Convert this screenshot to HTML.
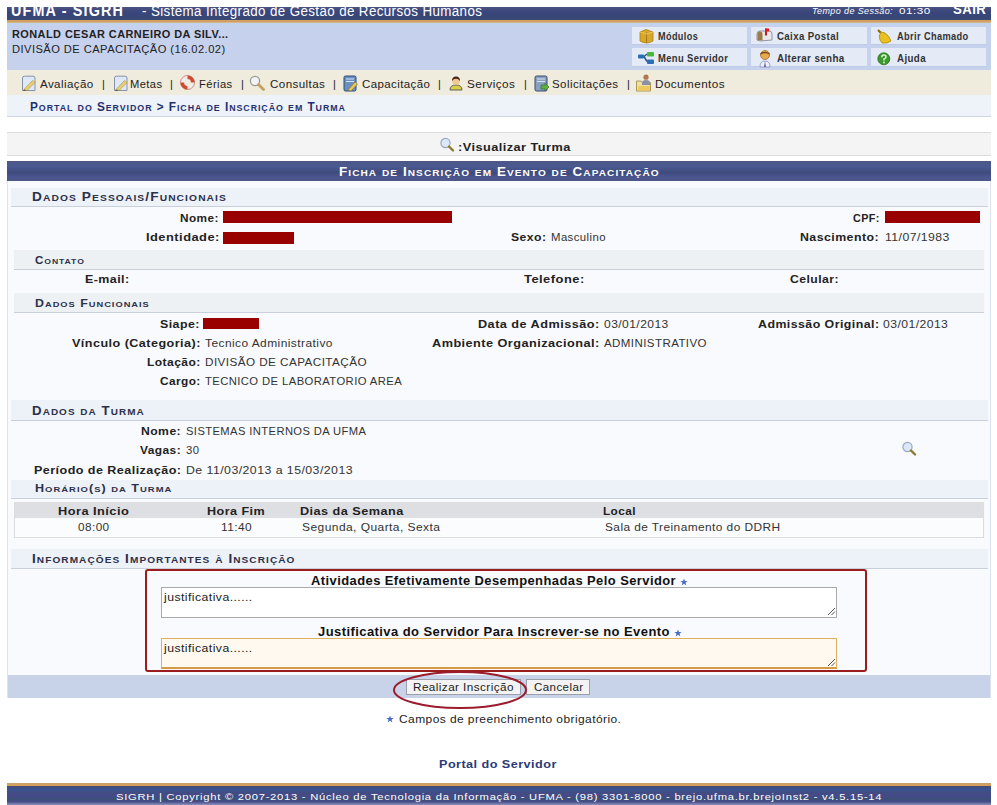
<!DOCTYPE html>
<html><head><meta charset="utf-8"><title>SIGRH</title>
<style>
html,body{margin:0;padding:0;background:#fff;}
body{width:997px;height:805px;position:relative;overflow:hidden;font-family:"Liberation Sans",sans-serif;}
.b{position:absolute;box-sizing:border-box;}
.t{position:absolute;white-space:nowrap;transform-origin:0 0;}
svg{position:absolute;}
</style></head><body>
<!-- header -->
<div class="b" style="left:7px;top:7px;width:984px;height:13px;background:linear-gradient(#4c5480,#3a467c 35%,#394678 70%,#3a4872);"></div>
<div class="b" style="left:7px;top:20px;width:984px;height:3px;background:linear-gradient(#d9a05e,#c9a06c 70%,#e8d0a8);"></div>
<div class="b" style="left:7px;top:23px;width:984px;height:47px;background:linear-gradient(#bfd6ec,#c6d1ee 3px,#c6d2ec);"></div>
<!-- modules -->
<div class="b" style="left:632px;top:27px;width:115px;height:18px;background:#e4ebf7;border-bottom:1px solid #bccbe6;"></div>
<div class="b" style="left:751px;top:27px;width:116px;height:18px;background:#e4ebf7;border-bottom:1px solid #bccbe6;"></div>
<div class="b" style="left:871px;top:27px;width:115px;height:18px;background:#e4ebf7;border-bottom:1px solid #bccbe6;"></div>
<div class="b" style="left:632px;top:48px;width:115px;height:19px;background:#e4ebf7;border-bottom:1px solid #bccbe6;"></div>
<div class="b" style="left:751px;top:48px;width:116px;height:19px;background:#e4ebf7;border-bottom:1px solid #bccbe6;"></div>
<div class="b" style="left:871px;top:48px;width:115px;height:19px;background:#e4ebf7;border-bottom:1px solid #bccbe6;"></div>
<!-- menu -->
<div class="b" style="left:7px;top:70px;width:984px;height:25px;background:#efebdd;"></div>
<div class="b" style="left:7px;top:95px;width:984px;height:22px;background:#eef2f9;border-bottom:1px solid #cfd6e2;"></div>
<!-- visualizar -->
<div class="b" style="left:7px;top:132px;width:984px;height:24px;background:#f4f4f4;border-top:1px solid #dcdcdc;border-bottom:1px solid #dcdcdc;"></div>
<!-- form caption -->
<div class="b" style="left:7px;top:161px;width:984px;height:20px;background:linear-gradient(#4e5784,#4a5990 28%,#3e4b7c 58%,#4a5690 80%,#4e5886);"></div>
<!-- form body -->
<div class="b" style="left:7px;top:181px;width:984px;height:517px;background:#f9fafd;border:1px solid #dde3ee;border-top:none;"></div>
<!-- subheaders -->
<div class="b" style="left:11px;top:188px;width:977px;height:19px;background:#edf1f8;border-bottom:1px solid #c9d0dc;"></div>
<div class="b" style="left:14px;top:250px;width:970px;height:20px;background:#edf1f4;border-bottom:1px solid #c9d0dc;"></div>
<div class="b" style="left:14px;top:293px;width:970px;height:20px;background:#edf1f4;border-bottom:1px solid #c9d0dc;"></div>
<div class="b" style="left:11px;top:400px;width:977px;height:21px;background:#edf1f8;border-bottom:1px solid #c9d0dc;"></div>
<div class="b" style="left:11px;top:480px;width:977px;height:19px;background:#edf1f8;border-bottom:1px solid #c9d0dc;"></div>
<!-- horario table -->
<div class="b" style="left:14px;top:502px;width:970px;height:36px;background:#fbfcfd;border:1px solid #dcdcdc;"></div>
<div class="b" style="left:15px;top:503px;width:968px;height:15px;background:#dedfe3;"></div>
<div class="b" style="left:11px;top:549px;width:977px;height:20px;background:#edf1f8;border-bottom:1px solid #c9d0dc;"></div>
<!-- red box -->
<div class="b" style="left:145px;top:569px;width:722px;height:103px;border:2px solid #9b1c1c;border-radius:3px;"></div>
<div class="b" style="left:161px;top:587px;width:676px;height:31px;background:#fff;border:1px solid #a9a9a9;"></div>
<div class="b" style="left:161px;top:638px;width:676px;height:31px;background:#fff9f0;border:1px solid #e0b060;border-bottom:2px solid #d49a48;"></div>
<!-- button bar -->
<div class="b" style="left:8px;top:675px;width:982px;height:23px;background:#c8d3ea;"></div>
<div class="b" style="left:406px;top:679px;width:115px;height:16px;background:#f3f3f3;border:1px solid #9aa0a8;"></div>
<div class="b" style="left:526px;top:679px;width:64px;height:16px;background:#f3f3f3;border:1px solid #9aa0a8;"></div>
<svg style="left:390px;top:668px" width="142" height="45"><ellipse cx="70" cy="22" rx="66" ry="18" fill="none" stroke="#9b1c2c" stroke-width="2"/></svg>
<!-- footer -->
<div class="b" style="left:7px;top:783px;width:984px;height:3px;background:linear-gradient(#b8a078,#d6a060 40%,#d0a060);"></div>
<div class="b" style="left:7px;top:786px;width:984px;height:19px;background:linear-gradient(#474870 0%,#375490 15%,#434c84 35%,#454a88 50%,#3c5078 70%,#474c88 82%,#8a92ba 100%);"></div>
<!-- red redaction bars -->
<div class="b" style="left:223px;top:211px;width:229px;height:12px;background:#990000;"></div>
<div class="b" style="left:885px;top:211px;width:95px;height:12px;background:#990000;"></div>
<div class="b" style="left:223px;top:232px;width:71px;height:12px;background:#990000;"></div>
<div class="b" style="left:203px;top:318px;width:56px;height:11px;background:#990000;"></div>
<!-- module icons -->
<svg style="left:638px;top:28px" width="17" height="17" viewBox="0 0 17 17"><path d="M2 4 L8 1.5 L15 4 L15 13 Q8.5 17 2 13 Z" fill="#d6a72a" stroke="#b07f10" stroke-width="0.8"/><path d="M8.5 4.5 L8.5 15" stroke="#a57a15" stroke-width="1"/><path d="M2 4 L8.5 6 L15 4" fill="none" stroke="#f0d060" stroke-width="0.8"/></svg>
<svg style="left:637px;top:51px" width="18" height="14" viewBox="0 0 18 14"><path d="M7 5.5 L10 3 M7 5.5 L10 10.5" stroke="#2b5a8a" stroke-width="1.5" fill="none"/><rect x="1" y="3.5" width="6" height="4" rx="1" fill="#2a6db8"/><rect x="10" y="1" width="7" height="4.5" rx="1" fill="#4cb83a"/><rect x="10" y="8.5" width="7" height="4.5" rx="1" fill="#2a6db8"/></svg>
<svg style="left:756px;top:28px" width="17" height="15" viewBox="0 0 17 15"><path d="M1 6 Q1 3 4 3 L13 3 Q16 3 16 6 L16 12 L4 13 L1 12 Z" fill="#e8e8ec" stroke="#8a8a96" stroke-width="0.9"/><path d="M1.5 6 Q1.5 3.5 4 3.5 Q6.5 3.5 6.5 6 L6.5 12.5 L1.5 12 Z" fill="#9c7a4a"/><rect x="9" y="0.5" width="2" height="7" fill="#c02020"/><rect x="9" y="0.5" width="4" height="3" fill="#e02020"/></svg>
<svg style="left:759px;top:50px" width="12" height="18" viewBox="0 0 12 18"><circle cx="6" cy="5" r="4.5" fill="#e8a850" stroke="#9a6020" stroke-width="0.7"/><path d="M1.5 4 Q6 1 10.5 4" fill="none" stroke="#7a4a10" stroke-width="1.5"/><path d="M1 17 Q1 11 6 11 Q11 11 11 17 Z" fill="#f0f0f8" stroke="#8080b0" stroke-width="0.7"/><path d="M6 11 L5 17 L7 17 Z" fill="#5060b0"/></svg>
<svg style="left:876px;top:28px" width="17" height="17" viewBox="0 0 17 17"><path d="M2 2 L5 5" stroke="#8a6a10" stroke-width="2.2"/><path d="M5 4 Q10 4 13 9 L15 13 Q11 16 6 15 L4 12 Q2 8 5 4 Z" fill="#e8c020" stroke="#b08a10" stroke-width="0.8"/></svg>
<svg style="left:877px;top:52px" width="14" height="14" viewBox="0 0 14 14"><circle cx="6.8" cy="6.8" r="6" fill="#3a9a30" stroke="#2a7020" stroke-width="0.8"/><path d="M4.8 5.2 Q4.8 3 6.9 3 Q9 3 9 5 Q9 6.3 7 7 L7 8.5" fill="none" stroke="#d8f0c8" stroke-width="1.6"/><circle cx="7" cy="10.5" r="0.9" fill="#d8f0c8"/></svg>
<!-- menu icons -->
<svg style="left:20px;top:75px" width="17" height="17" viewBox="0 0 17 17"><path d="M2.5 15.5 L2.5 3 Q2.5 1.2 4.5 1.2 L13 1.2 Q15 1.2 15 3 L15 15.5 Z" fill="#dfe8f8" stroke="#7a8aa0" stroke-width="0.9"/><path d="M4 14.5 L12.5 5.5 L15 7.5 L7 15.5 Z" fill="#e8d070" stroke="#a89040" stroke-width="0.6"/><path d="M3 16 L4 14.5 L6.5 15.8 Z" fill="#605030"/></svg>
<svg style="left:112px;top:75px" width="17" height="17" viewBox="0 0 17 17"><path d="M2.5 15.5 L2.5 3 Q2.5 1.2 4.5 1.2 L13 1.2 Q15 1.2 15 3 L15 15.5 Z" fill="#dfe8f8" stroke="#7a8aa0" stroke-width="0.9"/><path d="M4 14.5 L12.5 5.5 L15 7.5 L7 15.5 Z" fill="#e8d070" stroke="#a89040" stroke-width="0.6"/><path d="M3 16 L4 14.5 L6.5 15.8 Z" fill="#605030"/></svg>
<svg style="left:180px;top:75px" width="15" height="15" viewBox="0 0 15 15"><circle cx="7.5" cy="7.5" r="5.2" fill="none" stroke="#f4ecec" stroke-width="3.6"/><path d="M7.5 2.3 A5.2 5.2 0 0 1 12.7 7.5" fill="none" stroke="#d04a30" stroke-width="3.6"/><path d="M7.5 12.7 A5.2 5.2 0 0 1 2.3 7.5" fill="none" stroke="#d04a30" stroke-width="3.6"/><circle cx="7.5" cy="7.5" r="7" fill="none" stroke="#b05040" stroke-width="0.6"/></svg>
<svg style="left:249px;top:75px" width="16" height="16" viewBox="0 0 16 16"><circle cx="6" cy="6" r="4.6" fill="#f4f4f8" stroke="#9a9a90" stroke-width="1.3"/><path d="M9.5 9.5 L14.5 14.5" stroke="#c8a060" stroke-width="2.8" stroke-linecap="round"/></svg>
<svg style="left:343px;top:75px" width="16" height="17" viewBox="0 0 16 17"><rect x="1" y="1" width="12" height="15" rx="1.5" fill="#6a90c0" stroke="#2a4a78" stroke-width="1"/><path d="M3 4 H11 M3 6.5 H11" stroke="#d0e4f8" stroke-width="1"/><path d="M5 15 L12 7 L14.5 9 L8 16 Z" fill="#e8c860" stroke="#907020" stroke-width="0.6"/></svg>
<svg style="left:449px;top:75px" width="14" height="16" viewBox="0 0 14 16"><path d="M1 15 Q1 10 7 10 Q13 10 13 15 Z" fill="#d8d040" stroke="#606060" stroke-width="1"/><circle cx="7" cy="6" r="3.8" fill="#f0c890"/><path d="M3 6 Q3 1.5 7 1.5 Q11 1.5 11 6 Q9 3.5 7 3.8 Q5 3.5 3 6 Z" fill="#4a2010"/></svg>
<svg style="left:534px;top:75px" width="16" height="17" viewBox="0 0 16 17"><rect x="1" y="1" width="12" height="15" rx="1.5" fill="#8aa0c0" stroke="#3a4a68" stroke-width="1"/><path d="M3 4 H11 M3 6.5 H11" stroke="#d8e4f0" stroke-width="1"/><path d="M7 10 H11 V8 L15 12 L11 16 V14 H7 Z" fill="#60b040" stroke="#2a6a20" stroke-width="0.6"/></svg>
<svg style="left:635px;top:74px" width="17" height="18" viewBox="0 0 17 18"><path d="M1.5 7 H6 L7.5 8.5 H15.5 V17 H1.5 Z" fill="#f0e0a0" stroke="#a09050" stroke-width="0.9"/><circle cx="11" cy="3.2" r="2.6" fill="#b07850"/><path d="M7 9 Q7 6 11 6 Q15 6 15 9 V11 H7 Z" fill="#8a90a8"/><rect x="3" y="12" width="12" height="4.5" fill="#f0c860"/></svg>
<!-- magnifiers -->
<svg style="left:439px;top:137px" width="16" height="16" viewBox="0 0 16 16"><circle cx="6.5" cy="6" r="4.6" fill="#dce8f8" stroke="#98aac0" stroke-width="1.2"/><path d="M10 9.5 L14 13.5" stroke="#8a7a30" stroke-width="2.4" stroke-linecap="round"/></svg>
<svg style="left:901px;top:441px" width="16" height="16" viewBox="0 0 16 16"><circle cx="6.5" cy="6" r="4.6" fill="#dce8f8" stroke="#98aac0" stroke-width="1.2"/><path d="M10 9.5 L14 13.5" stroke="#8a7a30" stroke-width="2.4" stroke-linecap="round"/></svg>
<!-- stars -->
<svg style="left:680px;top:578px" width="8" height="8" viewBox="0 0 10 10"><path d="M5 0.5 L6.2 3.7 L9.5 3.8 L6.9 5.9 L7.9 9.3 L5 7.3 L2.1 9.3 L3.1 5.9 L0.5 3.8 L3.8 3.7 Z" fill="#4a6cc8"/></svg>
<svg style="left:674px;top:629px" width="8" height="8" viewBox="0 0 10 10"><path d="M5 0.5 L6.2 3.7 L9.5 3.8 L6.9 5.9 L7.9 9.3 L5 7.3 L2.1 9.3 L3.1 5.9 L0.5 3.8 L3.8 3.7 Z" fill="#4a6cc8"/></svg>
<svg style="left:386px;top:715px" width="8" height="8" viewBox="0 0 10 10"><path d="M5 0.5 L6.2 3.7 L9.5 3.8 L6.9 5.9 L7.9 9.3 L5 7.3 L2.1 9.3 L3.1 5.9 L0.5 3.8 L3.8 3.7 Z" fill="#4a6cc8"/></svg>
<!-- textarea resize grips -->
<svg style="left:826px;top:606px" width="10" height="10" viewBox="0 0 10 10"><path d="M2 9 L9 2 M5.5 9 L9 5.5" stroke="#555" stroke-width="1"/></svg>
<svg style="left:826px;top:657px" width="10" height="10" viewBox="0 0 10 10"><path d="M2 9 L9 2 M5.5 9 L9 5.5" stroke="#555" stroke-width="1"/></svg>

<span class="t" id="t0" style="left:11.0px;top:3px;font-size:16px;line-height:16px;color:#fff;font-weight:bold;transform:scaleX(0.8960);letter-spacing:1.3px;">UFMA - SIGRH</span>
<span class="t" id="t1" style="left:142.0px;top:4px;font-size:14px;line-height:14px;color:#fff;transform:scaleX(0.9544);letter-spacing:0.4px;">- Sistema Integrado de Gestão de Recursos Humanos</span>
<span class="t" id="t2" style="left:812.0px;top:7px;font-size:9px;line-height:9px;color:#fff;font-style:italic;transform:scaleX(0.9985);letter-spacing:0.4px;">Tempo de Sessão:</span>
<span class="t" id="t3" style="left:899.0px;top:7px;font-size:9px;line-height:9px;color:#fff;transform:scaleX(1.2963);letter-spacing:0.4px;">01:30</span>
<span class="t" id="t4" style="left:953.0px;top:2px;font-size:14px;line-height:14px;color:#fff;font-weight:bold;transform:scaleX(0.9469);letter-spacing:0.4px;">SAIR</span>
<span class="t" id="t5" style="left:12.0px;top:30px;font-size:10px;line-height:10px;color:#222;font-weight:bold;transform:scaleX(1.0939);letter-spacing:0.4px;">RONALD CESAR CARNEIRO DA SILV...</span>
<span class="t" id="t6" style="left:12.0px;top:45px;font-size:10px;line-height:10px;color:#222;transform:scaleX(1.1138);letter-spacing:0.4px;">DIVISÃO DE CAPACITAÇÃO (16.02.02)</span>
<span class="t" id="t7" style="left:658.0px;top:32px;font-size:10px;line-height:10px;color:#333;font-weight:bold;transform:scaleX(0.9133);letter-spacing:0.4px;">Módulos</span>
<span class="t" id="t8" style="left:658.0px;top:54px;font-size:10px;line-height:10px;color:#333;font-weight:bold;transform:scaleX(0.9401);letter-spacing:0.4px;">Menu Servidor</span>
<span class="t" id="t9" style="left:777.0px;top:32px;font-size:10px;line-height:10px;color:#333;font-weight:bold;transform:scaleX(0.9645);letter-spacing:0.4px;">Caixa Postal</span>
<span class="t" id="t10" style="left:777.0px;top:54px;font-size:10px;line-height:10px;color:#333;font-weight:bold;transform:scaleX(0.9794);letter-spacing:0.4px;">Alterar senha</span>
<span class="t" id="t11" style="left:897.0px;top:32px;font-size:10px;line-height:10px;color:#333;font-weight:bold;transform:scaleX(0.9246);letter-spacing:0.4px;">Abrir Chamado</span>
<span class="t" id="t12" style="left:897.0px;top:54px;font-size:10px;line-height:10px;color:#333;font-weight:bold;transform:scaleX(0.9738);letter-spacing:0.4px;">Ajuda</span>
<span class="t" id="t13" style="left:40.0px;top:79px;font-size:11px;line-height:11px;color:#222;transform:scaleX(1.0507);letter-spacing:0.4px;">Avaliação</span>
<span class="t" id="t14" style="left:102.0px;top:79px;font-size:11px;line-height:11px;color:#222;letter-spacing:0.4px;">|</span>
<span class="t" id="t15" style="left:130.0px;top:79px;font-size:11px;line-height:11px;color:#222;transform:scaleX(1.0135);letter-spacing:0.4px;">Metas</span>
<span class="t" id="t16" style="left:170.0px;top:79px;font-size:11px;line-height:11px;color:#222;letter-spacing:0.4px;">|</span>
<span class="t" id="t17" style="left:199.0px;top:79px;font-size:11px;line-height:11px;color:#222;transform:scaleX(1.0191);letter-spacing:0.4px;">Férias</span>
<span class="t" id="t18" style="left:241.0px;top:79px;font-size:11px;line-height:11px;color:#222;letter-spacing:0.4px;">|</span>
<span class="t" id="t19" style="left:270.0px;top:79px;font-size:11px;line-height:11px;color:#222;transform:scaleX(1.0530);letter-spacing:0.4px;">Consultas</span>
<span class="t" id="t20" style="left:333.0px;top:79px;font-size:11px;line-height:11px;color:#222;letter-spacing:0.4px;">|</span>
<span class="t" id="t21" style="left:362.0px;top:79px;font-size:11px;line-height:11px;color:#222;transform:scaleX(1.0418);letter-spacing:0.4px;">Capacitação</span>
<span class="t" id="t22" style="left:438.0px;top:79px;font-size:11px;line-height:11px;color:#222;letter-spacing:0.4px;">|</span>
<span class="t" id="t23" style="left:467.0px;top:79px;font-size:11px;line-height:11px;color:#222;transform:scaleX(1.0619);letter-spacing:0.4px;">Serviços</span>
<span class="t" id="t24" style="left:524.0px;top:79px;font-size:11px;line-height:11px;color:#222;letter-spacing:0.4px;">|</span>
<span class="t" id="t25" style="left:552.0px;top:79px;font-size:11px;line-height:11px;color:#222;transform:scaleX(1.0472);letter-spacing:0.4px;">Solicitações</span>
<span class="t" id="t26" style="left:627.0px;top:79px;font-size:11px;line-height:11px;color:#222;letter-spacing:0.4px;">|</span>
<span class="t" id="t27" style="left:655.0px;top:79px;font-size:11px;line-height:11px;color:#222;transform:scaleX(1.0644);letter-spacing:0.4px;">Documentos</span>
<span class="t" id="t28" style="left:30.0px;top:101px;font-size:12px;line-height:12px;color:#1f3070;font-weight:bold;letter-spacing:0.96px;transform:scaleX(0.9824);">P<span style="font-size:9.0px">ORTAL</span> <span style="font-size:9.0px">DO</span> S<span style="font-size:9.0px">ERVIDOR</span> &gt; F<span style="font-size:9.0px">ICHA</span> <span style="font-size:9.0px">DE</span> I<span style="font-size:9.0px">NSCRIÇÃO</span> <span style="font-size:9.0px">EM</span> T<span style="font-size:9.0px">URMA</span></span>
<span class="t" id="t29" style="left:458.0px;top:142px;font-size:11px;line-height:11px;color:#222;font-weight:bold;transform:scaleX(1.1571);letter-spacing:0.4px;">:Visualizar Turma</span>
<span class="t" id="t30" style="left:339.0px;top:166px;font-size:12px;line-height:12px;color:#fff;font-weight:bold;letter-spacing:0.96px;transform:scaleX(1.1185);">F<span style="font-size:9.0px">ICHA</span> <span style="font-size:9.0px">DE</span> I<span style="font-size:9.0px">NSCRIÇÃO</span> <span style="font-size:9.0px">EM</span> E<span style="font-size:9.0px">VENTO</span> <span style="font-size:9.0px">DE</span> C<span style="font-size:9.0px">APACITAÇÃO</span></span>
<span class="t" id="t31" style="left:32.0px;top:191px;font-size:12px;line-height:12px;color:#2c3048;font-weight:bold;letter-spacing:0.96px;transform:scaleX(1.1388);">D<span style="font-size:9.0px">ADOS</span> P<span style="font-size:9.0px">ESSOAIS</span>/F<span style="font-size:9.0px">UNCIONAIS</span></span>
<span class="t" id="t32" style="left:180.0px;top:213px;font-size:11px;line-height:11px;color:#222;font-weight:bold;transform:scaleX(1.0736);letter-spacing:0.4px;">Nome:</span>
<span class="t" id="t33" style="left:853.0px;top:213px;font-size:11px;line-height:11px;color:#222;font-weight:bold;transform:scaleX(0.9793);letter-spacing:0.4px;">CPF:</span>
<span class="t" id="t34" style="left:146.0px;top:232px;font-size:11px;line-height:11px;color:#222;font-weight:bold;transform:scaleX(1.1700);letter-spacing:0.4px;">Identidade:</span>
<span class="t" id="t35" style="left:511.0px;top:232px;font-size:11px;line-height:11px;color:#222;font-weight:bold;transform:scaleX(1.1073);letter-spacing:0.4px;">Sexo:</span>
<span class="t" id="t36" style="left:551.0px;top:232px;font-size:11px;line-height:11px;color:#333;transform:scaleX(1.0334);letter-spacing:0.4px;">Masculino</span>
<span class="t" id="t37" style="left:800.0px;top:232px;font-size:11px;line-height:11px;color:#222;font-weight:bold;transform:scaleX(1.1218);letter-spacing:0.4px;">Nascimento:</span>
<span class="t" id="t38" style="left:885.0px;top:232px;font-size:11px;line-height:11px;color:#333;transform:scaleX(1.1124);letter-spacing:0.4px;">11/07/1983</span>
<span class="t" id="t39" style="left:35.0px;top:256px;font-size:10px;line-height:10px;color:#2c3048;font-weight:bold;letter-spacing:0.80px;transform:scaleX(1.1514);">C<span style="font-size:7.5px">ONTATO</span></span>
<span class="t" id="t40" style="left:85.0px;top:274px;font-size:11px;line-height:11px;color:#222;font-weight:bold;transform:scaleX(1.1296);letter-spacing:0.4px;">E-mail:</span>
<span class="t" id="t41" style="left:524.0px;top:274px;font-size:11px;line-height:11px;color:#222;font-weight:bold;transform:scaleX(1.1744);letter-spacing:0.4px;">Telefone:</span>
<span class="t" id="t42" style="left:790.0px;top:274px;font-size:11px;line-height:11px;color:#222;font-weight:bold;transform:scaleX(1.1097);letter-spacing:0.4px;">Celular:</span>
<span class="t" id="t43" style="left:35.0px;top:299px;font-size:10px;line-height:10px;color:#2c3048;font-weight:bold;letter-spacing:0.80px;transform:scaleX(1.2384);">D<span style="font-size:7.5px">ADOS</span> F<span style="font-size:7.5px">UNCIONAIS</span></span>
<span class="t" id="t44" style="left:160.0px;top:319px;font-size:11px;line-height:11px;color:#222;font-weight:bold;transform:scaleX(1.1264);letter-spacing:0.4px;">Siape:</span>
<span class="t" id="t45" style="left:478.0px;top:319px;font-size:11px;line-height:11px;color:#222;font-weight:bold;transform:scaleX(1.1535);letter-spacing:0.4px;">Data de Admissão:</span>
<span class="t" id="t46" style="left:604.0px;top:319px;font-size:11px;line-height:11px;color:#333;transform:scaleX(1.0954);letter-spacing:0.4px;">03/01/2013</span>
<span class="t" id="t47" style="left:758.0px;top:319px;font-size:11px;line-height:11px;color:#222;font-weight:bold;transform:scaleX(1.1243);letter-spacing:0.4px;">Admissão Original:</span>
<span class="t" id="t48" style="left:883.0px;top:319px;font-size:11px;line-height:11px;color:#333;transform:scaleX(1.1056);letter-spacing:0.4px;">03/01/2013</span>
<span class="t" id="t49" style="left:72.0px;top:338px;font-size:11px;line-height:11px;color:#222;font-weight:bold;transform:scaleX(1.1447);letter-spacing:0.4px;">Vínculo (Categoria):</span>
<span class="t" id="t50" style="left:205.0px;top:338px;font-size:11px;line-height:11px;color:#333;transform:scaleX(1.0874);letter-spacing:0.4px;">Tecnico Administrativo</span>
<span class="t" id="t51" style="left:432.0px;top:338px;font-size:11px;line-height:11px;color:#222;font-weight:bold;transform:scaleX(1.1542);letter-spacing:0.4px;">Ambiente Organizacional:</span>
<span class="t" id="t52" style="left:604.0px;top:338px;font-size:11px;line-height:11px;color:#333;transform:scaleX(1.0478);letter-spacing:0.4px;">ADMINISTRATIVO</span>
<span class="t" id="t53" style="left:147.0px;top:357px;font-size:11px;line-height:11px;color:#222;font-weight:bold;transform:scaleX(1.0949);letter-spacing:0.4px;">Lotação:</span>
<span class="t" id="t54" style="left:205.0px;top:357px;font-size:11px;line-height:11px;color:#333;transform:scaleX(1.0656);letter-spacing:0.4px;">DIVISÃO DE CAPACITAÇÃO</span>
<span class="t" id="t55" style="left:160.0px;top:376px;font-size:11px;line-height:11px;color:#222;font-weight:bold;transform:scaleX(1.0750);letter-spacing:0.4px;">Cargo:</span>
<span class="t" id="t56" style="left:205.0px;top:376px;font-size:11px;line-height:11px;color:#333;transform:scaleX(1.0236);letter-spacing:0.4px;">TECNICO DE LABORATORIO AREA</span>
<span class="t" id="t57" style="left:32.0px;top:405px;font-size:12px;line-height:12px;color:#2c3048;font-weight:bold;letter-spacing:0.96px;transform:scaleX(1.1044);">D<span style="font-size:9.0px">ADOS</span> <span style="font-size:9.0px">DA</span> T<span style="font-size:9.0px">URMA</span></span>
<span class="t" id="t58" style="left:141.0px;top:426px;font-size:11px;line-height:11px;color:#222;font-weight:bold;transform:scaleX(1.1067);letter-spacing:0.4px;">Nome:</span>
<span class="t" id="t59" style="left:186.0px;top:426px;font-size:11px;line-height:11px;color:#333;transform:scaleX(1.0165);letter-spacing:0.4px;">SISTEMAS INTERNOS DA UFMA</span>
<span class="t" id="t60" style="left:140.0px;top:445px;font-size:11px;line-height:11px;color:#222;font-weight:bold;transform:scaleX(1.0851);letter-spacing:0.4px;">Vagas:</span>
<span class="t" id="t61" style="left:186.0px;top:445px;font-size:11px;line-height:11px;color:#333;transform:scaleX(1.0271);letter-spacing:0.4px;">30</span>
<span class="t" id="t62" style="left:34.0px;top:465px;font-size:11px;line-height:11px;color:#222;font-weight:bold;transform:scaleX(1.1406);letter-spacing:0.4px;">Período de Realização:</span>
<span class="t" id="t63" style="left:186.0px;top:465px;font-size:11px;line-height:11px;color:#333;transform:scaleX(1.1205);letter-spacing:0.4px;">De 11/03/2013 a 15/03/2013</span>
<span class="t" id="t64" style="left:35.0px;top:484px;font-size:10px;line-height:10px;color:#2c3048;font-weight:bold;letter-spacing:0.80px;transform:scaleX(1.2587);">H<span style="font-size:7.5px">ORÁRIO</span>(<span style="font-size:7.5px">S</span>) <span style="font-size:7.5px">DA</span> T<span style="font-size:7.5px">URMA</span></span>
<span class="t" id="t65" style="left:58.0px;top:506px;font-size:11px;line-height:11px;color:#222;font-weight:bold;transform:scaleX(1.1624);letter-spacing:0.4px;">Hora Início</span>
<span class="t" id="t66" style="left:207.0px;top:506px;font-size:11px;line-height:11px;color:#222;font-weight:bold;transform:scaleX(1.1440);letter-spacing:0.4px;">Hora Fim</span>
<span class="t" id="t67" style="left:300.0px;top:506px;font-size:11px;line-height:11px;color:#222;font-weight:bold;transform:scaleX(1.1524);letter-spacing:0.4px;">Dias da Semana</span>
<span class="t" id="t68" style="left:603.0px;top:506px;font-size:11px;line-height:11px;color:#222;font-weight:bold;transform:scaleX(1.0705);letter-spacing:0.4px;">Local</span>
<span class="t" id="t69" style="left:78.0px;top:522px;font-size:11px;line-height:11px;color:#333;transform:scaleX(1.0701);letter-spacing:0.4px;">08:00</span>
<span class="t" id="t70" style="left:221.0px;top:522px;font-size:11px;line-height:11px;color:#333;transform:scaleX(1.0829);letter-spacing:0.4px;">11:40</span>
<span class="t" id="t71" style="left:302.0px;top:522px;font-size:11px;line-height:11px;color:#333;transform:scaleX(1.0912);letter-spacing:0.4px;">Segunda, Quarta, Sexta</span>
<span class="t" id="t72" style="left:605.0px;top:522px;font-size:11px;line-height:11px;color:#333;transform:scaleX(1.0804);letter-spacing:0.4px;">Sala de Treinamento do DDRH</span>
<span class="t" id="t73" style="left:32.0px;top:553px;font-size:12px;line-height:12px;color:#2c3048;font-weight:bold;letter-spacing:0.96px;transform:scaleX(1.1190);">I<span style="font-size:9.0px">NFORMAÇÕES</span> I<span style="font-size:9.0px">MPORTANTES</span> <span style="font-size:9.0px">À</span> I<span style="font-size:9.0px">NSCRIÇÃO</span></span>
<span class="t" id="t74" style="left:311.0px;top:575px;font-size:12px;line-height:12px;color:#111;font-weight:bold;transform:scaleX(1.0785);letter-spacing:0.4px;">Atividades Efetivamente Desempenhadas Pelo Servidor</span>
<span class="t" id="t75" style="left:164.0px;top:592px;font-size:11px;line-height:11px;color:#222;transform:scaleX(1.1124);letter-spacing:0.4px;">justificativa......</span>
<span class="t" id="t76" style="left:318.0px;top:626px;font-size:12px;line-height:12px;color:#111;font-weight:bold;transform:scaleX(1.0817);letter-spacing:0.4px;">Justificativa do Servidor Para Inscrever-se no Evento</span>
<span class="t" id="t77" style="left:164.0px;top:643px;font-size:11px;line-height:11px;color:#222;transform:scaleX(1.1124);letter-spacing:0.4px;">justificativa......</span>
<span class="t" id="t78" style="left:413.0px;top:682px;font-size:11px;line-height:11px;color:#222;transform:scaleX(1.0663);letter-spacing:0.4px;">Realizar Inscrição</span>
<span class="t" id="t79" style="left:534.0px;top:682px;font-size:11px;line-height:11px;color:#222;transform:scaleX(1.0480);letter-spacing:0.4px;">Cancelar</span>
<span class="t" id="t80" style="left:399.0px;top:714px;font-size:11px;line-height:11px;color:#222;transform:scaleX(1.0871);letter-spacing:0.4px;">Campos de preenchimento obrigatório.</span>
<span class="t" id="t81" style="left:439.0px;top:759px;font-size:11px;line-height:11px;color:#2a3b78;font-weight:bold;transform:scaleX(1.1486);letter-spacing:0.4px;">Portal do Servidor</span>
<span class="t" id="t82" style="left:116.0px;top:793px;font-size:9px;line-height:9px;color:#fff;transform:scaleX(1.2428);letter-spacing:0.6px;">SIGRH | Copyright © 2007-2013 - Núcleo de Tecnologia da Informação - UFMA - (98) 3301-8000 - brejo.ufma.br.brejoInst2 - v4.5.15-14</span>
</body></html>
